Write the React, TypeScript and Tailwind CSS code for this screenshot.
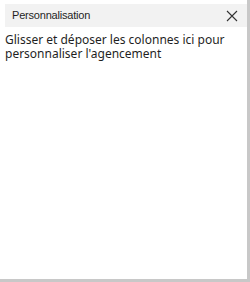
import React from 'react';

export default function App() {
  return (
    <div
      className="w-[250px] h-[282px] bg-white border-r-[3px] border-b-[3px] border-[#c8c8c8] flex flex-col pt-[4px] pl-[5px]"
      style={{ fontFamily: '"Noto Sans", "Open Sans", sans-serif' }}
    >
      <div className="h-[23px] bg-[#f2f2f2] flex items-center justify-between pl-[7px] pr-[9px]">
        <span className="text-[11px] tracking-[-0.2px] text-[#1f1f1f] leading-none font-['Liberation_Sans',sans-serif]">
          Personnalisation
        </span>
        <button className="w-[12px] h-[12px] flex items-center justify-center">
          <svg width="12" height="12" viewBox="0 0 12 12">
            <path d="M1 1L11 11M11 1L1 11" stroke="#333" strokeWidth="1.1" fill="none" />
          </svg>
        </button>
      </div>
      <p className="mt-[6px] pr-[6px] text-[12px] leading-[14px] text-[#1f1f1f]">
        Glisser et déposer les colonnes ici pour personnaliser l'agencement
      </p>
    </div>
  );
}
